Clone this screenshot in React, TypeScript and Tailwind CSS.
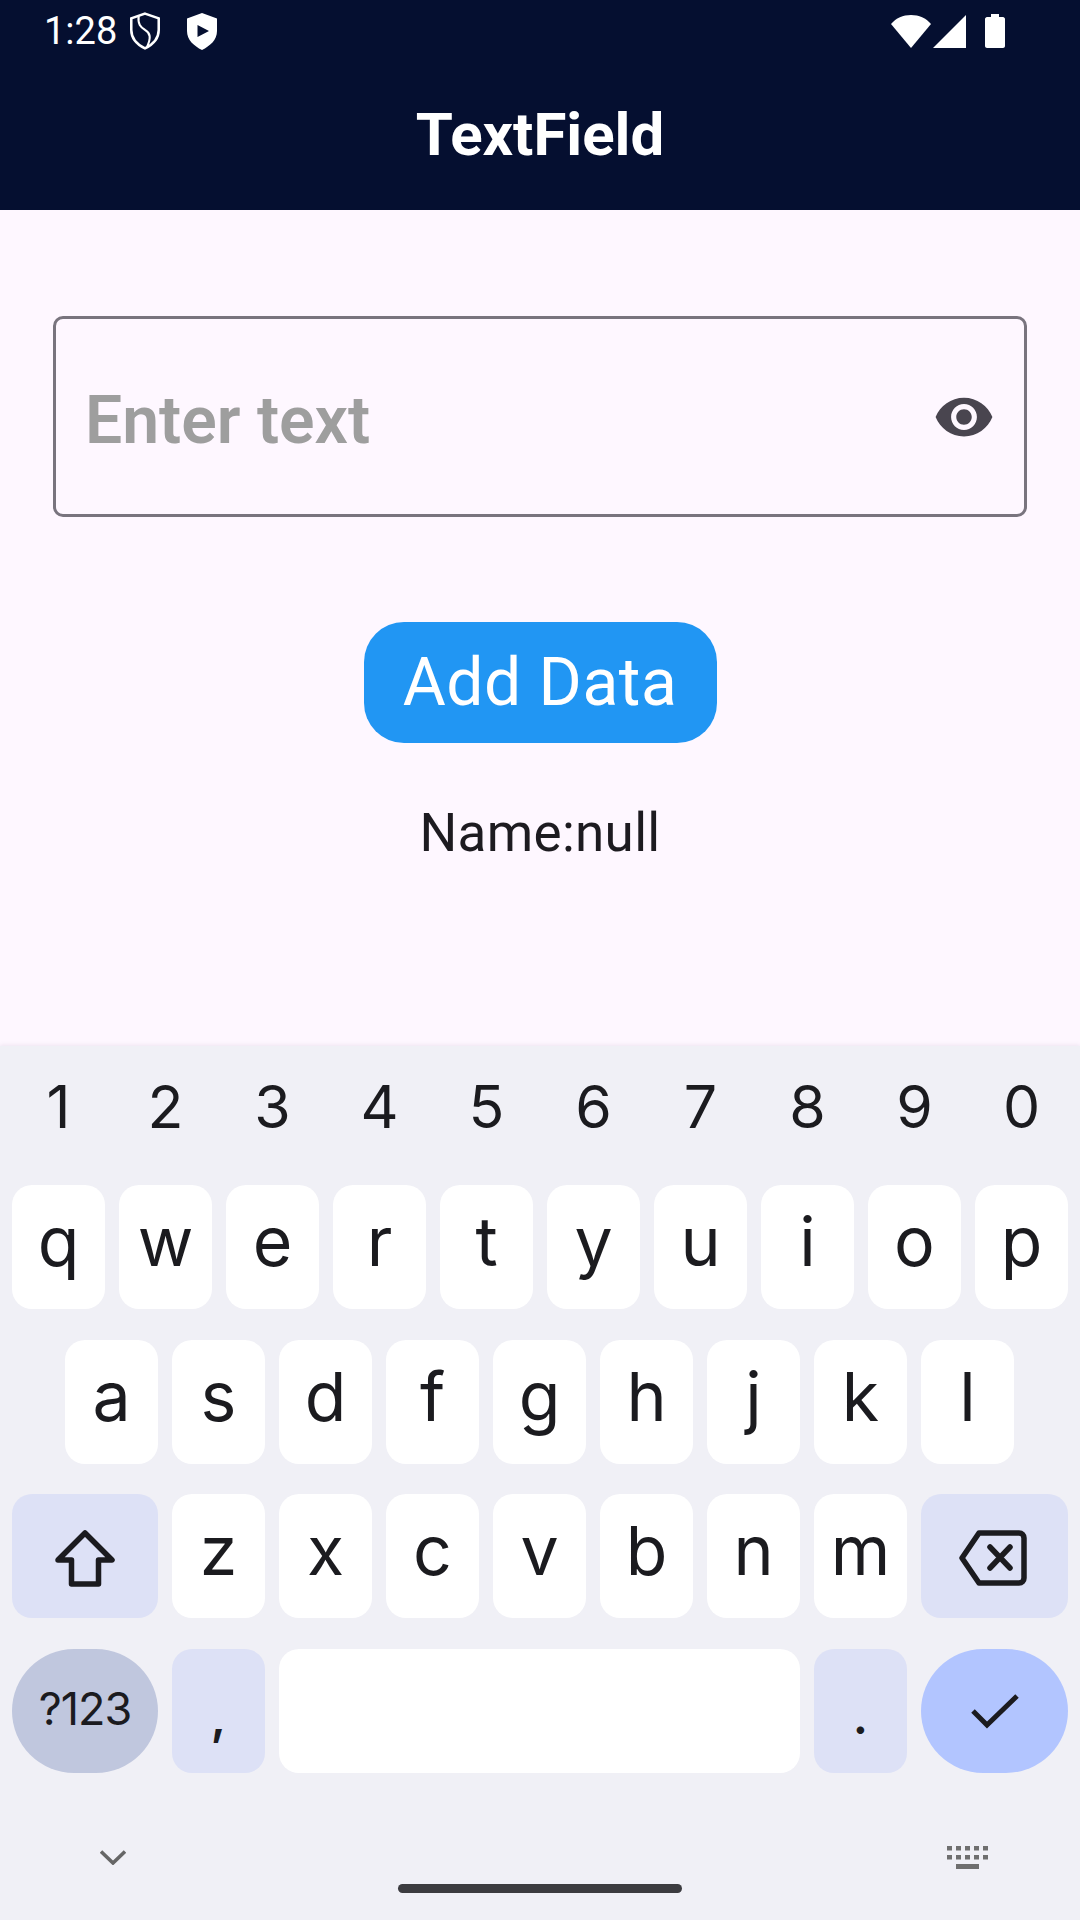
import React from "react";

const Key = ({ c, w = "w-[93px]", cls = "bg-white rounded-[20px]", text = "text-[68px] pb-[12px]" }: { c: React.ReactNode; w?: string; cls?: string; text?: string }) => (
  <div className={`h-[124px] ${w} ${cls} ${text} flex items-center justify-center leading-none shrink-0`}>{c}</div>
);

const Letters = ({ s }: { s: string }) => (
  <>
    {s.split("").map((l) => (
      <Key key={l} c={l} />
    ))}
  </>
);

export default function App() {
  return (
    <div className="w-[1080px] h-[1920px] flex flex-col overflow-hidden bg-[#fef7ff] font-['Roboto',sans-serif]">
      <header className="h-[210px] shrink-0 bg-[#050f30] text-white flex flex-col">
        <div className="h-[62px] flex items-center pl-[44px] pr-[75px]">
          <span className="text-[38px] leading-none font-normal w-[85px]">1:28</span>
          <svg width="32" height="38" viewBox="0 0 30 36" fill="none" stroke="#fff" strokeWidth="2.4">
            <path d="M15 1.5 L28 6 V17 C28 25 22 31 15 34.5 C8 31 2 25 2 17 V6 Z" />
            <path d="M9 4 C8 12 11 14 15 17 C20 20 21 24 17 33" strokeWidth="2" />
          </svg>
          <svg width="30" height="37" viewBox="0 0 30 37" className="ml-[26px]">
            <path fill="#fff" fillRule="evenodd" d="M15 0 L30 5.5 V18 C30 27 23 33 15 37 C7 33 0 27 0 18 V5.5 Z M10.500 12 V24 L22 18 Z" />
          </svg>
          <div className="ml-auto flex items-center">
            <svg width="40" height="33" viewBox="0 0 40 33">
              <path fill="#fff" d="M20 33 L0 9 C5 3 12 0 20 0 C28 0 35 3 40 9 Z" />
            </svg>
            <svg width="33" height="33" viewBox="0 0 33 33" className="ml-[2px]">
              <path fill="#fff" d="M33 0 V33 H0 Z" />
            </svg>
            <svg width="20" height="34" viewBox="0 0 20 34" className="ml-[19px]">
              <path fill="#fff" d="M6 0 H14 V3 H18 C19 3 20 4 20 5 V32 C20 33 19 34 18 34 H2 C1 34 0 33 0 32 V5 C0 4 1 3 2 3 H6 Z" />
            </svg>
          </div>
        </div>
        <div className="flex-1 flex items-center justify-center pb-[3px]">
          <h1 className="text-[60px] leading-none font-bold">TextField</h1>
        </div>
      </header>

      <main className="h-[836px] shrink-0 flex flex-col items-center pt-[106px]">
        <div className="w-[974px] h-[201px] border-[3px] border-[#79747e] rounded-[10px] flex items-center justify-between pl-[29px] pr-[29px]">
          <span className="text-[66px] leading-none font-semibold text-[#9e9e9e] pt-[8px]">Enter text</span>
          <svg width="62" height="62" viewBox="0 0 24 24" fill="#49454f">
            <path d="M12 4.500C7 4.500 2.730 7.610 1 12c1.730 4.390 6 7.500 11 7.500s9.270-3.110 11-7.500c-1.730-4.390-6-7.500-11-7.500zM12 17c-2.760 0-5-2.240-5-5s2.240-5 5-5 5 2.240 5 5-2.240 5-5 5zm0-8c-1.660 0-3 1.340-3 3s1.340 3 3 3 3-1.340 3-3-1.340-3-3-3z" />
          </svg>
        </div>
        <button className="mt-[105px] w-[353px] h-[121px] rounded-[40px] bg-[#2196f3] text-white text-[66px] leading-none tracking-[0.5px] pt-[1px]">Add Data</button>
        <p className="mt-[65px] text-[53px] leading-[50px] text-[#1d1b20] tracking-[0.3px]">Name:null</p>
      </main>

      <section className="flex-1 bg-[#f0f0f6] flex flex-col shadow-[0_-1px_4px_rgba(120,100,130,0.12)] font-['Inter',sans-serif] text-[#1b1b1f]">
        <div className="h-[139px] shrink-0 px-[12px] flex gap-[14px]">
          {"1234567890".split("").map((n) => (
            <div key={n} className="w-[93px] flex items-center justify-center text-[59px] leading-none font-normal pb-[18px]">{n}</div>
          ))}
        </div>
        <div className="flex flex-col gap-[30.67px]">
          <div className="flex gap-[14px] px-[12px]"><Letters s="qwertyuiop" /></div>
          <div className="flex gap-[14px] pl-[65px]"><Letters s="asdfghjkl" /></div>
          <div className="flex gap-[14px] px-[12px]">
            <Key
              w="w-[146px]"
              cls="bg-[#dde1f6] rounded-[20px]"
              c={
                <svg width="60" height="58" viewBox="0 0 60 58" fill="none" stroke="#1b1b1f" strokeWidth="5.5" strokeLinejoin="round">
                  <path d="M30 3 L57 30 H43.500 V54 H16.500 V30 H3 Z" />
                </svg>
              }
              text="pt-[6px]"
            />
            <Letters s="zxcvbnm" />
            <Key
              w="w-[147px]"
              cls="bg-[#dde1f6] rounded-[20px]"
              c={
                <svg width="68" height="56" viewBox="0 0 68 56" fill="none" stroke="#1b1b1f" strokeWidth="5.500" strokeLinejoin="round" strokeLinecap="round">
                  <path d="M20 3 H60 C63 3 65 5 65 8 V48 C65 51 63 53 60 53 H20 L3 28 Z" />
                  <path d="M31 17 L51 38 M51 17 L31 38" />
                </svg>
              }
              text="pt-[4px] pr-[4px]"
            />
          </div>
          <div className="flex gap-[14px] px-[12px]">
            <Key w="w-[146px]" cls="bg-[#c0c7de] rounded-[62px]" text="text-[45px] tracking-[-1px] pb-[4px]" c="?123" />
            <Key cls="bg-[#dde1f6] rounded-[20px]" text="text-[48px] font-semibold pt-[12px]" c="," />
            <Key w="w-[521px]" c="" />
            <Key cls="bg-[#dde1f6] rounded-[20px]" text="text-[48px] font-semibold pt-[12px]" c="." />
            <Key
              w="w-[147px]"
              cls="bg-[#b2c5ff] rounded-[62px]"
              c={
                <svg width="48" height="36" viewBox="0 0 48 36" fill="none" stroke="#1b1b1f" strokeWidth="5">
                  <path d="M2 18 L16 32 L46 3" />
                </svg>
              }
              text=""
            />
          </div>
        </div>
        <div className="flex-1 grid grid-cols-3">
          <div className="pl-[100px] pt-[77px]">
            <svg width="26" height="15" viewBox="0 0 26 15" fill="none" stroke="#666" strokeWidth="3.600">
              <path d="M1 1.500 L13 13 L25 1.500" />
            </svg>
          </div>
          <div className="flex justify-center items-end pb-[27px]">
            <div className="w-[284px] h-[9px] rounded-full bg-[#3c3c40]" />
          </div>
          <div className="flex justify-end pr-[92px] pt-[73px]">
            <svg width="41" height="23" viewBox="0 0 41 23" fill="#6f6f6f">
              <path d="M0 0h5v4.500H0zM9 0h5v4.500H9zM18 0h5v4.500h-5zM27 0h5v4.500h-5zM36 0h5v4.500h-5zM0 9h5v4.500H0zM9 9h5v4.500H9zM18 9h5v4.500h-5zM27 9h5v4.500h-5zM36 9h5v4.500h-5zM9 18h23v5H9z" />
            </svg>
          </div>
        </div>
      </section>
    </div>
  );
}
